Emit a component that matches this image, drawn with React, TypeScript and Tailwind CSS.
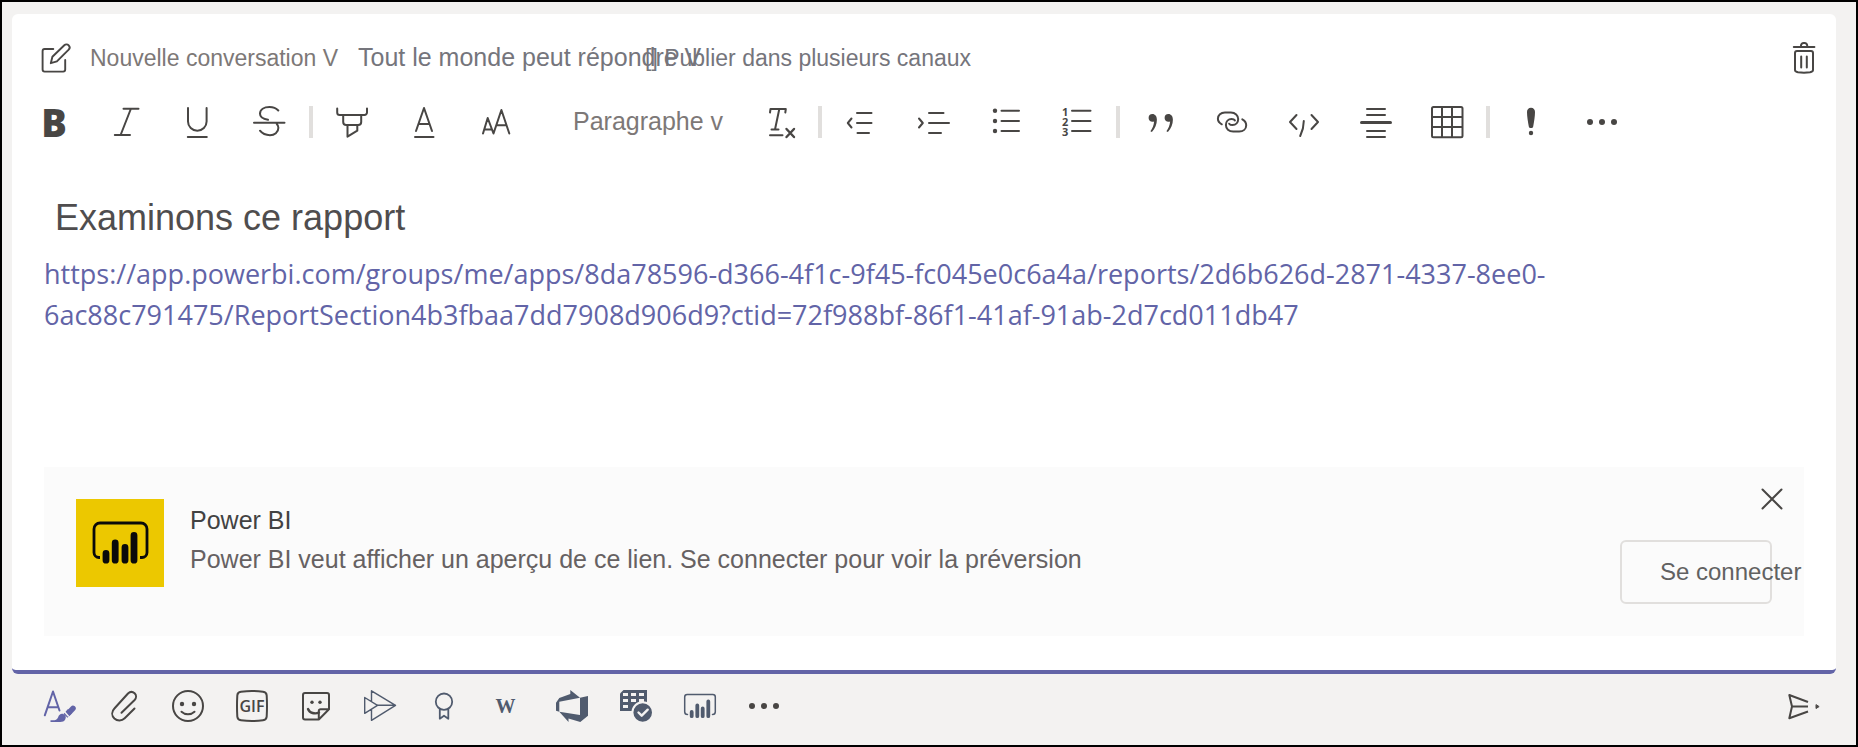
import type { ReactNode } from "react";

const INK = "#484644";
const SLATE = "#505b6e";

type IconProps = { children: ReactNode; color?: string; width?: number };

function Icon({ children, color = INK, width = 2 }: IconProps) {
  return (
    <svg
      viewBox="0 0 32 32"
      className="block size-8 overflow-visible"
      fill="none"
      stroke={color}
      strokeWidth={width}
      strokeLinecap="round"
      strokeLinejoin="round"
      aria-hidden="true"
    >
      {children}
    </svg>
  );
}

function Tool({ label, children }: { label: string; children: ReactNode }) {
  return (
    <button type="button" aria-label={label} className="flex size-8 shrink-0 items-center justify-center">
      {children}
    </button>
  );
}

function Separator() {
  return <div role="separator" className="mx-[23px] h-8 w-1 shrink-0 bg-[#e1dfdd]" />;
}

function Dots({ x }: { x: number[] }) {
  return (
    <Icon>
      {x.map((cx) => (
        <circle key={cx} cx={cx} cy="16" r="3" fill={INK} stroke="none" />
      ))}
    </Icon>
  );
}

function Header() {
  return (
    <div className="flex h-8 items-center pl-7 pr-4 text-[23px] text-[#75757c]">
      <Tool label="Nouvelle conversation">
        <Icon width={1.9}>
          <path d="M13.3 7H4.6a2 2 0 0 0-2 2v18.6a2 2 0 0 0 2 2h18.6a2 2 0 0 0 2-2V18" />
          <path d="M10.8 21.2l1.6-6.4L24.3 3.2a3.1 3.1 0 0 1 4.4.1 3.1 3.1 0 0 1 0 4.3L16.9 19.4z" />
        </Icon>
      </Tool>
      <select aria-label="Type de message" className="ml-[18px] appearance-none bg-transparent text-[#7d7877]">
        <option>Nouvelle conversation V</option>
      </select>
      <div className="ml-[19px] w-[287px] shrink-0">
        <select aria-label="Autorisations de réponse" className="w-[352px] appearance-none bg-transparent text-[25px]">
          <option>Tout le monde peut répondre V</option>
        </select>
      </div>
      <button type="button" className="whitespace-nowrap">
        [] Publier dans plusieurs canaux
      </button>
      <div className="ml-auto">
        <Tool label="Supprimer">
          <Icon>
            <path d="M5.8 5h20.6M13 5V3.6A2.6 2.6 0 0 1 15.6 1h1a2.6 2.6 0 0 1 2.6 2.6V5" />
            <path d="M7 11a2 2 0 0 1 2-2h14a2 2 0 0 1 2 2v17c0 1.6-1.4 2-3 2.3-4 .6-8 .6-12 0-1.6-.3-3-.7-3-2.3z" />
            <path d="M13.2 14.5v11M18.8 14.5v11" />
          </Icon>
        </Tool>
      </div>
    </div>
  );
}

function FormatBar() {
  return (
    <div className="mt-8 flex h-8 items-center pl-[26px]">
      <div className="flex gap-10">
        <Tool label="Gras">
          <span className="font-['Open_Sans',sans-serif] text-[38px] leading-8 font-extrabold text-[#484644]">B</span>
        </Tool>
        <Tool label="Italique">
          <Icon>
            <path d="M13.5 2.7H28.5M4.8 29H20M20.8 3 10.6 29" />
          </Icon>
        </Tool>
        <Tool label="Souligné">
          <Icon>
            <path d="M6 2v13.5a9.3 9.3 0 0 0 18.6 0V2M5.8 31h19" />
          </Icon>
        </Tool>
        <Tool label="Barré">
          <Icon>
            <path d="M24.3 4.5C22 2 18.500 1 15.500 1 10 1 6 3.600 6 7.800c0 3.400 3 5.200 8 6M22.800 18c1 1 1.600 2.200 1.600 3.800 0 4.600-4 7.400-8.400 7.400-4 0-7.600-1.400-10-4.500M0 16.700h30.500" />
          </Icon>
        </Tool>
      </div>
      <Separator />
      <div className="flex gap-10">
        <Tool label="Surlignage">
          <Icon>
            <path d="M1.200 2.500v4a2.500 2.500 0 0 0 2.500 2.500h24.800a2.500 2.500 0 0 0 2.500-2.500v-4" />
            <path d="M7.200 9v7a3 3 0 0 0 3 3h12a3 3 0 0 0 3-3V9M11.500 19v11.700l9.800-6V19" />
          </Icon>
        </Tool>
        <Tool label="Couleur de police">
          <Icon>
            <path d="M8 25 16 2l8 23M10.500 18h11M7 31h18.500" />
          </Icon>
        </Tool>
        <Tool label="Taille de police">
          <Icon>
            <path d="M3 27.500 7.700 12l5.800 15.500 7.900-23.500 7.900 23.500M16.800 19.300h9.500M4.500 23.500h7" />
          </Icon>
        </Tool>
      </div>
      <select
        aria-label="Style de paragraphe"
        className="ml-[61px] w-[152px] appearance-none bg-transparent text-[25px] text-[#7d7877]"
      >
        <option>Paragraphe v</option>
      </select>
      <div className="ml-[38px]">
        <Tool label="Effacer la mise en forme">
          <Icon>
            <path d="M7 6.500 7.500 3h15.300L22.300 6.500M16.300 3 12 23.500M8.500 23.500h7M7 29.300h12.500" />
            <path d="M23.500 23l7.500 8M31 23l-7.500 8" strokeWidth="2.400" />
          </Icon>
        </Tool>
      </div>
      <Separator />
      <div className="flex gap-10">
        <Tool label="Diminuer le retrait">
          <Icon>
            <path d="M12 7h14.500M12 17h14.500M12.500 27H24M6.500 12.500 2.800 17l3.700 4.500" />
          </Icon>
        </Tool>
        <Tool label="Augmenter le retrait">
          <Icon>
            <path d="M12 7h14.500M12 17h20M12 27h12M2 12.500 5.800 17 2 21.500" />
          </Icon>
        </Tool>
        <Tool label="Liste à puces">
          <Icon>
            <path d="M12.500 4.700h17.500M12.500 15h17.500M12.500 25h17.500" />
            <g fill={INK} stroke="none">
              <circle cx="6" cy="4.700" r="2.200" />
              <circle cx="6" cy="15" r="2.200" />
              <circle cx="6" cy="25" r="2.200" />
            </g>
          </Icon>
        </Tool>
        <Tool label="Liste numérotée">
          <Icon>
            <path d="M11 4.700h18.500M11 15h18.500M11 25h18.500" />
            <g fill={INK} stroke="none" className="font-['Open_Sans',sans-serif] text-[11px] font-bold">
              <text x="1" y="10">1</text>
              <text x="1" y="20">2</text>
              <text x="1" y="30">3</text>
            </g>
          </Icon>
        </Tool>
      </div>
      <Separator />
      <div className="flex gap-10">
        <Tool label="Citation">
          <Icon>
            <g fill={INK} stroke="none">
              <path d="M9.500 8a4 4 0 0 0-3.900 4c0 2.200 1.700 3.800 3.800 3.800.7 0 1.200-.1 1.700-.4-.3 3.600-1.600 6.800-3.700 9.800l1.500.8c3.200-3.600 5-7.800 5-12.300C13.900 10.200 12 8 9.500 8z" />
              <path d="M25.500 8a4 4 0 0 0-3.900 4c0 2.200 1.700 3.800 3.800 3.800.7 0 1.200-.1 1.700-.4-.3 3.600-1.600 6.800-3.700 9.800l1.500.8c3.200-3.600 5-7.800 5-12.300C29.900 10.200 28 8 25.500 8z" />
            </g>
          </Icon>
        </Tool>
        <Tool label="Insérer un lien">
          <Icon>
            <path d="M6.800 18.300C4.300 17 2.900 15 2.900 12.800c0-3.600 3-6.200 7-6.200h6c4.300 0 7.300 2.800 7.300 6.500 0 3.500-2.400 6-5.700 6-1.600 0-2.700-.5-3.300-1.400" />
            <path d="M27.300 13.300c2.500 1.300 3.900 3.500 3.900 5.900 0 3.700-3 6.300-7 6.300h-6c-4.300 0-7.300-2.800-7.300-6.500 0-3.500 2.400-6 5.700-6 1.600 0 2.700.5 3.300 1.400" />
          </Icon>
        </Tool>
        <Tool label="Extrait de code">
          <Icon>
            <path d="M9.500 9 3 16l6.500 7M24.500 9l6.500 7-6.500 7" />
            <path d="M16.800 15c0 5-1.200 10-3.600 15" />
          </Icon>
        </Tool>
        <Tool label="Ligne horizontale">
          <Icon>
            <path d="M8 3h18M8 9h18M8 25h18M8 31h18" />
            <path d="M2.500 16.500h29" strokeWidth="3" />
          </Icon>
        </Tool>
        <Tool label="Insérer un tableau">
          <Icon>
            <rect x="1" y="1" width="30.500" height="30.300" rx="1.500" />
            <path d="M11 1v30M21 1v30M1 11h30M1 21h30" />
          </Icon>
        </Tool>
      </div>
      <Separator />
      <div className="flex gap-10">
        <Tool label="Important">
          <Icon>
            <g fill={INK} stroke="none">
              <path d="M18 1.700c2.500 0 4 1.700 4 4.200 0 4.500-1 10-1.800 14.600-.2 1-1 1.500-2.200 1.500s-2-.5-2.200-1.500C15 15.900 14 10.400 14 5.900c0-2.500 1.500-4.200 4-4.200z" />
              <circle cx="18" cy="27" r="2.200" />
            </g>
          </Icon>
        </Tool>
        <Tool label="Autres options de mise en forme">
          <Dots x={[5, 17, 29]} />
        </Tool>
      </div>
    </div>
  );
}

function PowerBiLogo() {
  return (
    <svg viewBox="0 0 88 88" className="size-[88px] shrink-0 bg-[#ecc800]" aria-hidden="true">
      <path
        d="M24 58.500h-1a5 5 0 0 1-5-5V30a6 6 0 0 1 6-6h41a6 6 0 0 1 6 6v23.500a5 5 0 0 1-5 5h-2"
        fill="none"
        stroke="#0a0a0a"
        strokeWidth="2.800"
      />
      <path d="M30 54.500v6.700M39.200 44v17.200M49 48.500v12.700M58 36.500v24.700" stroke="#0a0a0a" strokeWidth="6.800" strokeLinecap="round" />
    </svg>
  );
}

function LinkPreview() {
  return (
    <section className="mx-8 mb-[34px] flex h-[169px] items-start bg-[#fbfbfb] pt-8 pl-8">
      <PowerBiLogo />
      <div className="ml-[26px] pt-0.5 text-[25px] leading-[39px]">
        <h2 className="text-[#424242]">Power BI</h2>
        <p className="text-[#666162]">
          Power BI veut afficher un aperçu de ce lien. Se connecter pour voir la préversion
        </p>
      </div>
      <div className="ml-auto flex flex-col items-end pr-8">
        <button type="button" aria-label="Fermer" className="-mt-5 -mr-5 flex size-10 items-center justify-center">
          <Icon>
            <path d="M6.500 6.500l19 19M25.500 6.500l-19 19" />
          </Icon>
        </button>
        <button
          type="button"
          className="mt-[21px] flex h-16 w-[152px] items-center rounded-md border-2 border-[#e1dfdd] pl-[38px] text-[24px] whitespace-nowrap text-[#616161]"
        >
          Se connecter
        </button>
      </div>
    </section>
  );
}

function BottomBar() {
  return (
    <div className="mt-4 mb-[23px] flex items-center gap-8 pl-8 pr-4">
      <Tool label="Mise en forme">
        <Icon color="#6264a7">
          <path d="M.8 25.300 9 1.500l6.500 19M3.500 17.300h10.500" />
          <path d="M24.500 23.200 29 18.300" strokeWidth="5.500" />
          <path d="M21.500 25.800 26 21" strokeWidth="5.500" strokeLinecap="butt" />
          <path d="M6.500 30.200c4 .5 6.500-.2 7.500-2.700 1-3 3-4.200 5.200-3.500 2.500.8 3.300 3.300 2 5.500-1 1.800-2.700 2.500-5 2.500H6.500z" fill="#6264a7" stroke="none" />
          <path d="M20.300 21.600l4 4.300" stroke="#f3f2f1" strokeWidth="1.500" />
        </Icon>
      </Tool>
      <Tool label="Joindre">
        <Icon>
          <path d="M26.500 18.500 16.700 28.300c-3 2.900-7.400 2.900-10.300.2-2.900-2.900-2.900-7 0-10L20 3.500c2-1.900 4.700-1.900 6.600-.2 1.900 1.900 1.900 4.700 0 6.700L13.500 22.800" />
        </Icon>
      </Tool>
      <Tool label="Emoji">
        <Icon>
          <circle cx="16" cy="16" r="15" />
          <path d="M9.500 21.800c3.500 3.300 9.500 3.300 13 0" />
          <g fill={INK} stroke="none">
            <circle cx="10" cy="14" r="2.200" />
            <circle cx="22" cy="14" r="2.200" />
          </g>
        </Icon>
      </Tool>
      <Tool label="GIF">
        <Icon>
          <path d="M5 1.800c7-1 15-1 22 0 2.300.3 3.600 1.500 3.700 3.700.4 7 .4 14 0 21-.1 2.200-1.400 3.400-3.700 3.700-7 1-15 1-22 0-2.300-.3-3.600-1.500-3.700-3.700-.4-7-.4-14 0-21C1.400 3.300 2.700 2.100 5 1.800z" />
          <text
            x="16"
            y="22"
            textAnchor="middle"
            fill={INK}
            stroke="none"
            className="font-['Open_Sans',sans-serif] text-[16px] font-semibold"
          >
            GIF
          </text>
        </Icon>
      </Tool>
      <Tool label="Autocollant">
        <Icon>
          <path d="M18.800 29.500H5a2 2 0 0 1-2-2V5a2 2 0 0 1 2-2h22a2 2 0 0 1 2 2v14.300zV21a1.700 1.700 0 0 1 1.700-1.700H29" />
          <path d="M8 19c1.500 4 7 5.500 11 3.500" strokeWidth="2.400" />
          <g fill={INK} stroke="none">
            <circle cx="12" cy="12.200" r="1.700" />
            <circle cx="20" cy="12.200" r="1.700" />
          </g>
        </Icon>
      </Tool>
      <Tool label="Flux">
        <Icon color={SLATE} width={1.400}>
          <path d="M7.500 11.500V.8L31.500 15.300 7.500 30.300V19.500M.7 7.500l12.800 7.800L.7 23.300zM13.500 15.300h18" />
        </Icon>
      </Tool>
      <Tool label="Félicitations">
        <Icon color={SLATE} width={1.800}>
          <circle cx="16" cy="11.700" r="8.200" />
          <path d="M11.800 19v9.700l4.200-3 4.300 3V19" />
        </Icon>
      </Tool>
      <Tool label="Wikipédia">
        <span className="pr-[5px] font-['Liberation_Serif',serif] text-[20px] leading-8 font-bold text-[#505b6e]">W</span>
      </Tool>
      <Tool label="Azure DevOps">
        <Icon>
          <path
            d="M0 12.700 3.300 8 14.300 4V0L24 7.700l8-1.700v19.700L24.300 32l-11.800-3.500V32L3.300 21.700 24 25V7.700L3.300 11.700v10L0 20.700z"
            fill={SLATE}
            stroke="none"
          />
        </Icon>
      </Tool>
      <Tool label="Approbations">
        <Icon>
          <path d="M3.500 0H27v21H0V3.500z" fill={SLATE} stroke="none" />
          <path
            d="M3 3h5v3H3zM11 3h5v3h-5zM19 3h5v3h-5zM3 9h5v3H3zM11 9h5v3h-5zM19 9h5v3h-5zM3 15h5v3H3z"
            fill="#f3f2f1"
            stroke="none"
          />
          <circle cx="22.700" cy="22.500" r="10.300" fill={SLATE} stroke="#f3f2f1" />
          <path d="M18.500 22.500l3.200 3.200 6-6" stroke="#f3f2f1" strokeWidth="2.400" />
        </Icon>
      </Tool>
      <Tool label="Power BI">
        <Icon color={SLATE} width={1.500}>
          <path d="M3.500 24.500c-1.800 0-2.800-1-2.800-2.800V7c0-1.500 1-2.500 2.500-2.500h25.600c1.500 0 2.500 1 2.500 2.500v14.700c0 1.800-1 2.800-2.800 2.800" />
          <path d="M7.700 22v4.200M13.300 15.500v10.700M18.700 18.500v7.700M24.300 11.500v14.700" strokeWidth="3.800" />
        </Icon>
      </Tool>
      <Tool label="Autres options">
        <Dots x={[4, 16, 28]} />
      </Tool>
      <div className="ml-auto">
        <Tool label="Envoyer">
          <Icon>
            <path d="M20 12 1.300 5l2.700 11.500-2.700 11.800 18.700-6.800M4 16.500h16" strokeLinecap="butt" />
            <path d="M28 15v3.500l2.800-1.700z" fill={INK} strokeWidth="1" />
          </Icon>
        </Tool>
      </div>
    </div>
  );
}

export default function App() {
  return (
    <div className="flex min-h-screen flex-col border-2 border-black bg-[#f3f2f1] pt-3 pr-5 pl-[10px] font-['Liberation_Sans',Arial,sans-serif]">
      <main className="flex grow flex-col rounded-md border-b-4 border-[#6264a7] bg-white pt-7">
        <Header />
        <FormatBar />
        <div className="grow px-8 pt-[58px]">
          <p className="pl-[11px] text-[36px] leading-[44px] text-[#4f4d4e]">Examinons ce rapport</p>
          <p className="mt-[14px] text-[27px] leading-10">
            <a
              href="https://app.powerbi.com/groups/me/apps/8da78596-d366-4f1c-9f45-fc045e0c6a4a/reports/2d6b626d-2871-4337-8ee0-6ac88c791475/ReportSection4b3fbaa7dd7908d906d9?ctid=72f988bf-86f1-41af-91ab-2d7cd011db47"
              className="font-['Open_Sans',sans-serif] break-words text-[#6264a7]"
            >
              https://app.powerbi.com/groups/me/apps/8da78596-d366-4f1c-9f45-fc045e0c6a4a/reports/2d6b626d-2871-4337-8ee0-
              <br />
              6ac88c791475/ReportSection4b3fbaa7dd7908d906d9?ctid=72f988bf-86f1-41af-91ab-2d7cd011db47
            </a>
          </p>
        </div>
        <LinkPreview />
      </main>
      <BottomBar />
    </div>
  );
}
